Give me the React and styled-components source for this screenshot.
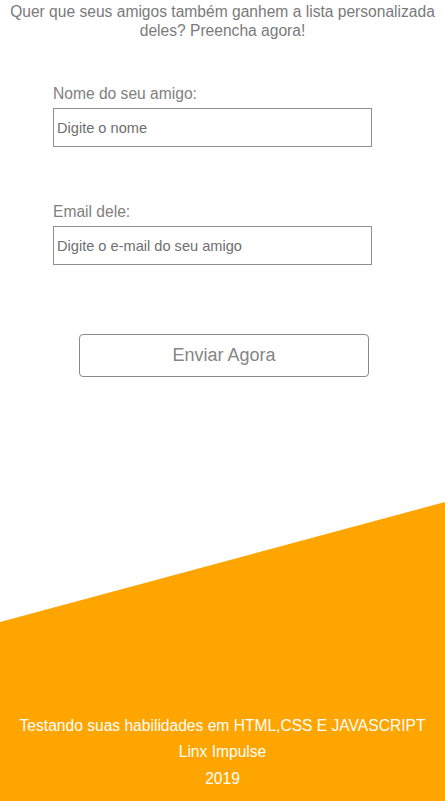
import React from 'react';
import styled, { createGlobalStyle } from 'styled-components';

const GlobalStyle = createGlobalStyle`
  html, body {
    margin: 0;
    padding: 0;
    background: #fff;
    font-family: "Liberation Sans", Arial, sans-serif;
  }
  * {
    box-sizing: border-box;
  }
`;

function Field({ label, placeholder, type = 'text' }) {
  return (
    <FieldBox>
      <Label>{label}</Label>
      <Input type={type} placeholder={placeholder} />
    </FieldBox>
  );
}

function App() {
  return (
    <Page>
      <GlobalStyle />
      <Intro>
        Quer que seus amigos também ganhem a lista personalizada deles?
        Preencha agora!
      </Intro>
      <Form onSubmit={e => e.preventDefault()}>
        <Field label="Nome do seu amigo:" placeholder="Digite o nome" />
        <Field
          label="Email dele:"
          type="email"
          placeholder="Digite o e-mail do seu amigo"
        />
        <SendButton type="submit">Enviar Agora</SendButton>
      </Form>
      <Footer>
        <FooterLine>Testando suas habilidades em HTML,CSS E JAVASCRIPT</FooterLine>
        <FooterLine>Linx Impulse</FooterLine>
        <FooterLine>2019</FooterLine>
      </Footer>
    </Page>
  );
}

const Page = styled.div`
  min-height: 100vh;
  display: flex;
  flex-direction: column;
`;

const Intro = styled.p`
  margin: 0;
  padding: 2px 0 0;
  font-size: 15.6px;
  line-height: 19px;
  color: #7a7a7a;
  text-align: center;
`;

const Form = styled.form`
  display: flex;
  flex-direction: column;
  padding: 45px 0 0 53px;
`;

const FieldBox = styled.div`
  display: flex;
  flex-direction: column;
  gap: 5px;
  margin-bottom: 56px;
  &:nth-of-type(2) {
    margin-bottom: 69px;
  }
`;

const Label = styled.label`
  font-size: 15.6px;
  line-height: 18px;
  color: #808080;
`;

const Input = styled.input`
  width: 319px;
  height: 39px;
  padding: 0 3px;
  border: 1px solid #8f8f8f;
  border-radius: 0;
  font-family: "Liberation Sans", Arial, sans-serif;
  font-size: 14.6px;
  color: #555;
  outline: none;
  &::placeholder {
    color: #6f6f6f;
  }
`;

const SendButton = styled.button`
  align-self: flex-start;
  margin-left: 26px;
  width: 290px;
  height: 43px;
  background: #fff;
  border: 1px solid #8a8a8a;
  border-radius: 4px;
  font-family: "Liberation Sans", Arial, sans-serif;
  font-size: 18px;
  color: #858585;
  cursor: pointer;
`;

const Footer = styled.footer`
  margin-top: auto;
  height: 299px;
  background: #ffa500;
  clip-path: polygon(0 120px, 100% 0, 100% 100%, 0 100%);
  display: flex;
  flex-direction: column;
  justify-content: flex-end;
  align-items: center;
  padding-bottom: 9px;
`;

const FooterLine = styled.p`
  margin: 0;
  font-size: 15.6px;
  line-height: 26.5px;
  color: #fff;
  text-align: center;
`;

export default App;
